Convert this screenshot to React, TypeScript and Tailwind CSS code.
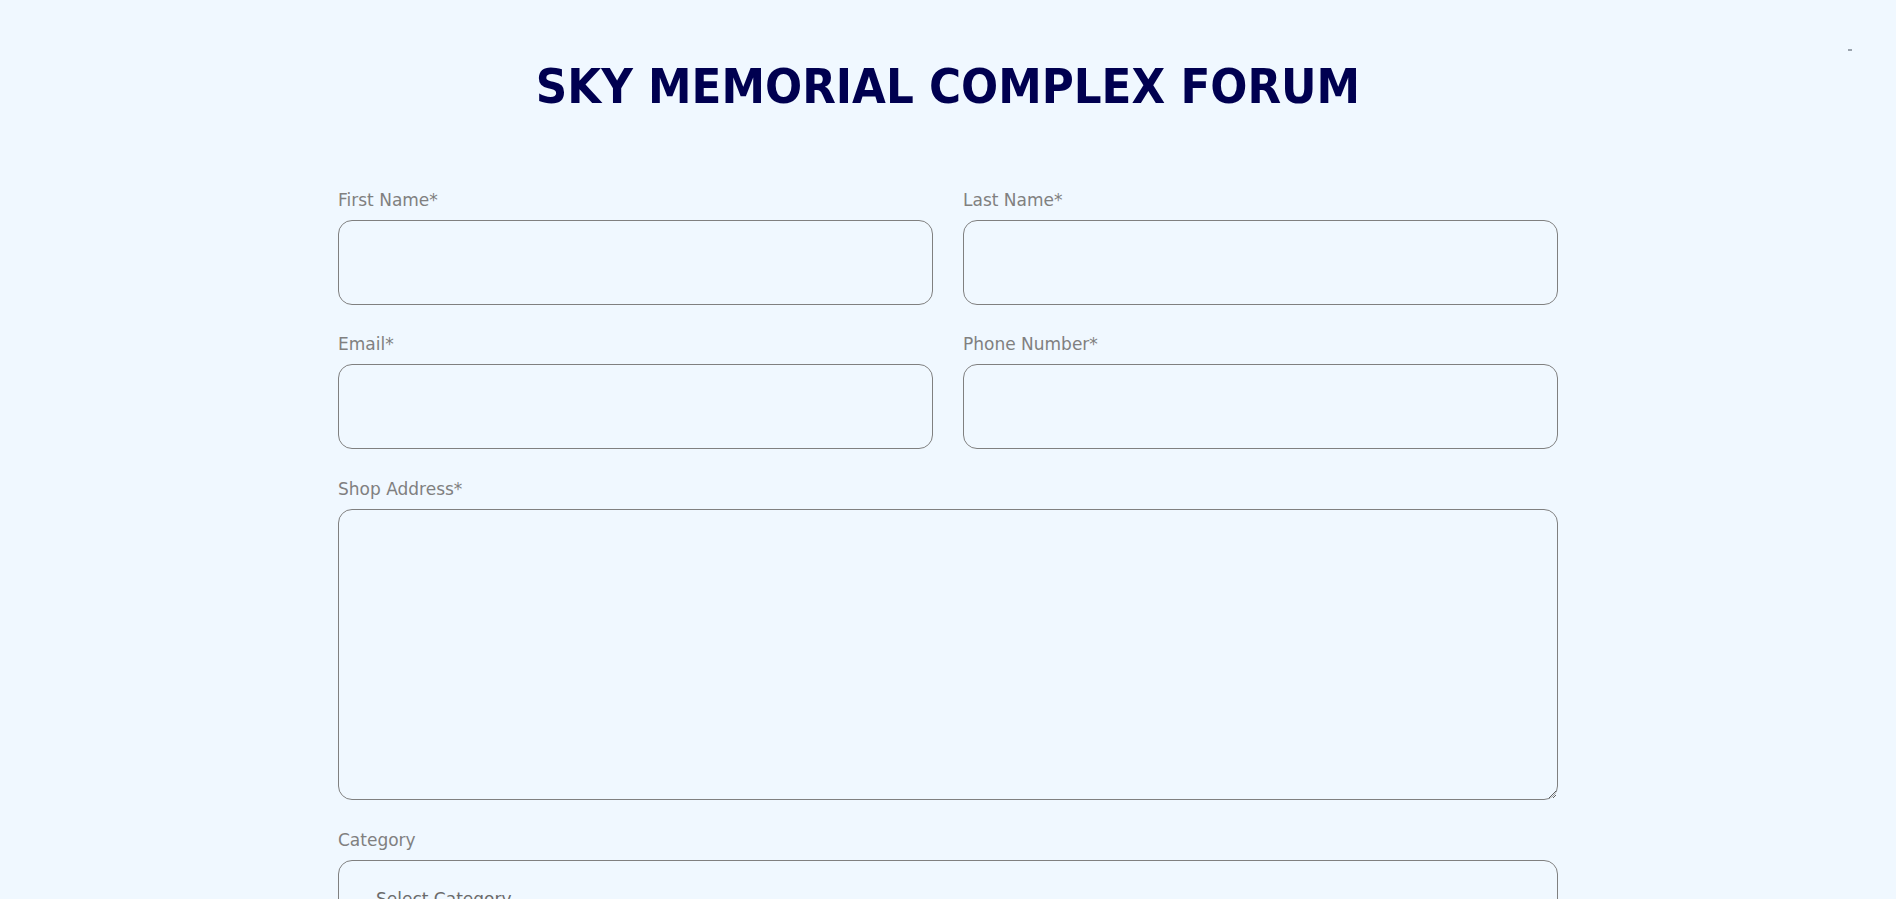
import React from "react";

type FieldProps = {
  label: string;
  name: string;
  type?: string;
};

const Field = ({ label, name, type = "text" }: FieldProps) => {
  return (
    <div className="flex flex-col">
      <label htmlFor={name} className="block mb-[10px] text-[17px] leading-[20px] text-[#808080]">
        {label}
      </label>
      <input
        id={name}
        name={name}
        type={type}
        className="block w-full h-[85px] px-4 bg-transparent border border-[#808080] rounded-[14px] text-[17px] text-[#333] outline-none"
      />
    </div>
  );
};

const App = () => {
  return (
    <div className="relative min-h-screen bg-[#f0f8ff] font-['DejaVu_Sans',sans-serif]">
      <span className="absolute top-[49px] right-[44px] w-[4px] h-[2px] bg-[#9aa3ad]" />

      <h1 className="pt-[62px] text-center text-[48.6px] leading-[48px] font-bold text-[#000050] font-['DejaVu_Sans_Condensed','DejaVu_Sans',sans-serif]">
        SKY MEMORIAL COMPLEX FORUM
      </h1>

      <form className="w-[1220px] mx-auto mt-[80px] pb-[80px]" onSubmit={(e) => e.preventDefault()}>
        <div className="grid grid-cols-2 gap-x-[30px] gap-y-[29px]">
          <Field label="First Name*" name="firstName" />
          <Field label="Last Name*" name="lastName" />
          <Field label="Email*" name="email" type="email" />
          <Field label="Phone Number*" name="phone" type="tel" />
        </div>

        <div className="flex flex-col mt-[30px]">
          <label htmlFor="address" className="block mb-[10px] text-[17px] leading-[20px] text-[#808080]">
            Shop Address*
          </label>
          <textarea
            id="address"
            name="address"
            className="block w-full h-[291px] p-4 bg-transparent border border-[#808080] rounded-[14px] text-[17px] text-[#333] outline-none"
          />
        </div>

        <div className="flex flex-col mt-[30px]">
          <label htmlFor="category" className="block mb-[10px] text-[17px] leading-[20px] text-[#808080]">
            Category
          </label>
          <select
            id="category"
            name="category"
            defaultValue=""
            className="block w-full h-[80px] pl-[37px] pr-4 appearance-none bg-transparent border border-[#808080] rounded-[14px] text-[17px] text-[#6b6b6b] outline-none"
          >
            <option value="" disabled>
              Select Category
            </option>
            <option value="grocery">Grocery</option>
            <option value="clothing">Clothing</option>
            <option value="electronics">Electronics</option>
            <option value="food">Food</option>
          </select>
        </div>
      </form>
    </div>
  );
};

export default App;
